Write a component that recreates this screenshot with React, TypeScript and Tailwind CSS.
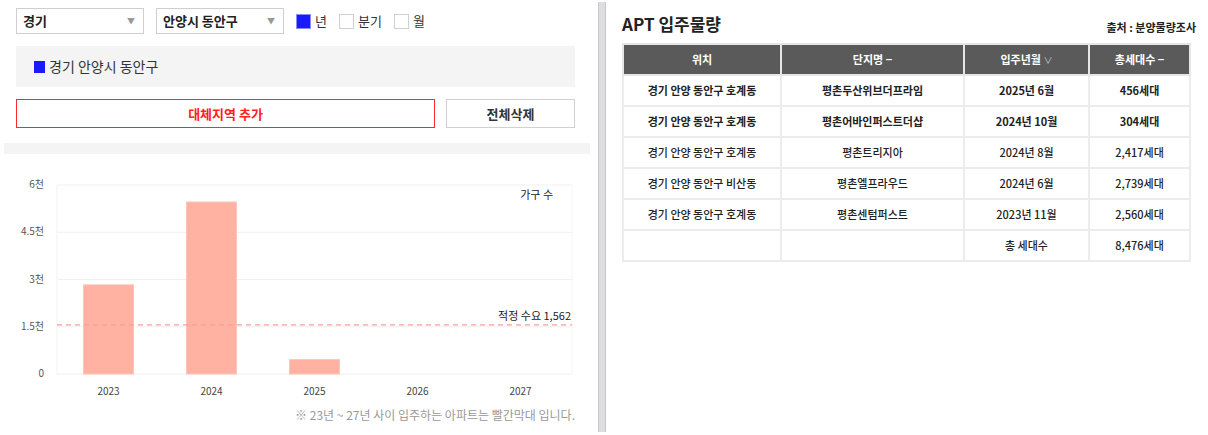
const font = { fontFamily: '"Noto Sans CJK KR", "Noto Sans", sans-serif' };

const rows = [
  { loc: "경기 안양 동안구 호계동", name: "평촌두산위브더프라임", ym: "2025년 6월", cnt: "456세대", bold: true },
  { loc: "경기 안양 동안구 호계동", name: "평촌어바인퍼스트더샵", ym: "2024년 10월", cnt: "304세대", bold: true },
  { loc: "경기 안양 동안구 호계동", name: "평촌트리지아", ym: "2024년 8월", cnt: "2,417세대", bold: false },
  { loc: "경기 안양 동안구 비산동", name: "평촌엘프라우드", ym: "2024년 6월", cnt: "2,739세대", bold: false },
  { loc: "경기 안양 동안구 호계동", name: "평촌센텀퍼스트", ym: "2023년 11월", cnt: "2,560세대", bold: false },
];

const bars = [
  { year: "2023", value: 2830 },
  { year: "2024", value: 5460 },
  { year: "2025", value: 456 },
  { year: "2026", value: 0 },
  { year: "2027", value: 0 },
];

function Select({ label }: { label: string }) {
  return (
    <div className="flex h-[26px] w-[128px] items-center justify-between border border-[#cfcfcf] bg-white pl-[6px] pr-[8px]">
      <span className="text-[13px] font-bold text-[#222]">{label}</span>
      <span className="text-[8px] text-[#999]">▼</span>
    </div>
  );
}

function Check({ label, checked }: { label: string; checked?: boolean }) {
  return (
    <div className="flex items-center gap-[4px]">
      <span
        className={
          checked
            ? "h-[15px] w-[15px] border border-[#8a8aff] bg-[#1a1aff]"
            : "h-[15px] w-[15px] border border-[#d0d0d0] bg-white"
        }
      />
      <span className="text-[13px] text-[#333]">{label}</span>
    </div>
  );
}

function Chart() {
  // plot area inside svg; svg sits at page x4, y153
  const left = 53;
  const right = 568;
  const top = 31;
  const bottom = 220;
  const h = bottom - top;
  const y = (v: number) => bottom - (v / 6000) * h;
  const step = (right - left) / 5;
  return (
    <svg width="586" height="250" className="block">
      {[0, 1500, 3000, 4500, 6000].map((v) => (
        <g key={v}>
          <line x1={left} x2={right} y1={y(v)} y2={y(v)} stroke="#f0f0f0" strokeWidth="1" />
          <text x={left - 13} y={y(v) + 3} textAnchor="end" fontSize="10" fill="#555" style={font}>
            {v === 0 ? "0" : `${v / 1000}천`}
          </text>
        </g>
      ))}
      <line x1={left} x2={left} y1={top} y2={bottom} stroke="#f2f2f2" />
      <line x1={right} x2={right} y1={top} y2={bottom} stroke="#f6f6f6" />
      {bars.map((b, i) => {
        const cx = left + step * i + step / 2;
        return (
          <g key={b.year}>
            {b.value > 0 && (
              <rect x={cx - 25} y={y(b.value)} width="50" height={bottom - y(b.value)} fill="#ffb1a2" stroke="#ffc4b8" strokeWidth="1" />
            )}
            <text x={cx} y={241} textAnchor="middle" fontSize="10" fill="#444" style={font}>
              {b.year}
            </text>
          </g>
        );
      })}
      <line x1={left} x2={right} y1={y(1562)} y2={y(1562)} stroke="#ff9a9a" strokeWidth="1.2" strokeDasharray="5 4" />
      <text x={right - 1} y={y(1562) - 5} textAnchor="end" fontSize="11" fill="#222" style={font}>
        적정 수요 1,562
      </text>
      <text x={549} y={45} textAnchor="end" fontSize="11" fill="#222" style={font}>
        가구 수
      </text>
    </svg>
  );
}

export default function App() {
  return (
    <div className="flex h-[435px] w-[1208px] bg-white" style={font}>
      <div className="w-[590px] pl-[4px]">
        <div className="flex flex-col gap-[12px] px-[12px] pt-[8px]">
          <div className="flex items-center gap-[12px]">
            <Select label="경기" />
            <Select label="안양시 동안구" />
            <div className="flex items-center gap-[12px]">
              <Check label="년" checked />
              <Check label="분기" />
              <Check label="월" />
            </div>
          </div>
          <div className="flex h-[41px] w-[559px] items-center gap-[4px] bg-[#f4f4f4] pl-[18px]">
            <span className="h-[12px] w-[11px] bg-[#1a1aff]" />
            <span className="text-[14px] text-[#333]">경기 안양시 동안구</span>
          </div>
          <div className="flex w-[559px] gap-[11px]">
            <button className="h-[29px] w-[419px] border border-[#ff2a2a] text-[13px] font-bold text-[#ff2020]">
              대체지역 추가
            </button>
            <button className="h-[29px] w-[129px] border border-[#d0d0d0] text-[13px] font-bold text-[#333]">
              전체삭제
            </button>
          </div>
        </div>
        <div className="mt-[15px] h-[11px] w-[586px] bg-[#f4f4f4]" />
        <Chart />
        <div className="mt-[2px] w-[571px] text-right text-[12px] text-[#999]">
          ※ 23년 ~ 27년 사이 입주하는 아파트는 빨간막대 입니다.
        </div>
      </div>
      <div className="ml-[8px] mt-[2px] h-[430px] w-[8px] border-x border-[#c8c8cc] bg-[#dedee2]" />
      <div className="flex-1 pl-[16px] pr-[12px]">
        <div className="flex items-end justify-between pt-[11px]">
          <span className="text-[17px] font-bold text-[#222]">APT 입주물량</span>
          <span className="pb-[1px] text-[11px] font-bold text-[#222]">출처 : 분양물량조사</span>
        </div>
        <table className="mt-[6px] w-[569px] border-collapse text-[11px] text-[#222]">
          <thead>
            <tr className="h-[31px] bg-[#5a5a5a] text-white">
              <th className="w-[158px] border-2 border-[#e6e6e6] font-bold">위치</th>
              <th className="w-[183px] border-2 border-[#e6e6e6] font-bold">단지명 −</th>
              <th className="w-[125px] border-2 border-[#e6e6e6] font-bold">
                입주년월 <span className="text-[9px] font-normal text-[#ccc]">∨</span>
              </th>
              <th className="border-2 border-[#e6e6e6] font-bold">총세대수 −</th>
            </tr>
          </thead>
          <tbody>
            {rows.map((r, i) => (
              <tr key={i} className={r.bold ? "h-[31px] font-bold" : "h-[31px] font-medium"}>
                <td className="border-2 border-[#ececec] text-center">{r.loc}</td>
                <td className="border-2 border-[#ececec] text-center">{r.name}</td>
                <td className="border-2 border-[#ececec] text-center">{r.ym}</td>
                <td className="border-2 border-[#ececec] text-center">{r.cnt}</td>
              </tr>
            ))}
            <tr className="h-[31px] font-medium">
              <td className="border-2 border-[#ececec]" />
              <td className="border-2 border-[#ececec]" />
              <td className="border-2 border-[#ececec] text-center">총 세대수</td>
              <td className="border-2 border-[#ececec] text-center">8,476세대</td>
            </tr>
          </tbody>
        </table>
      </div>
    </div>
  );
}
